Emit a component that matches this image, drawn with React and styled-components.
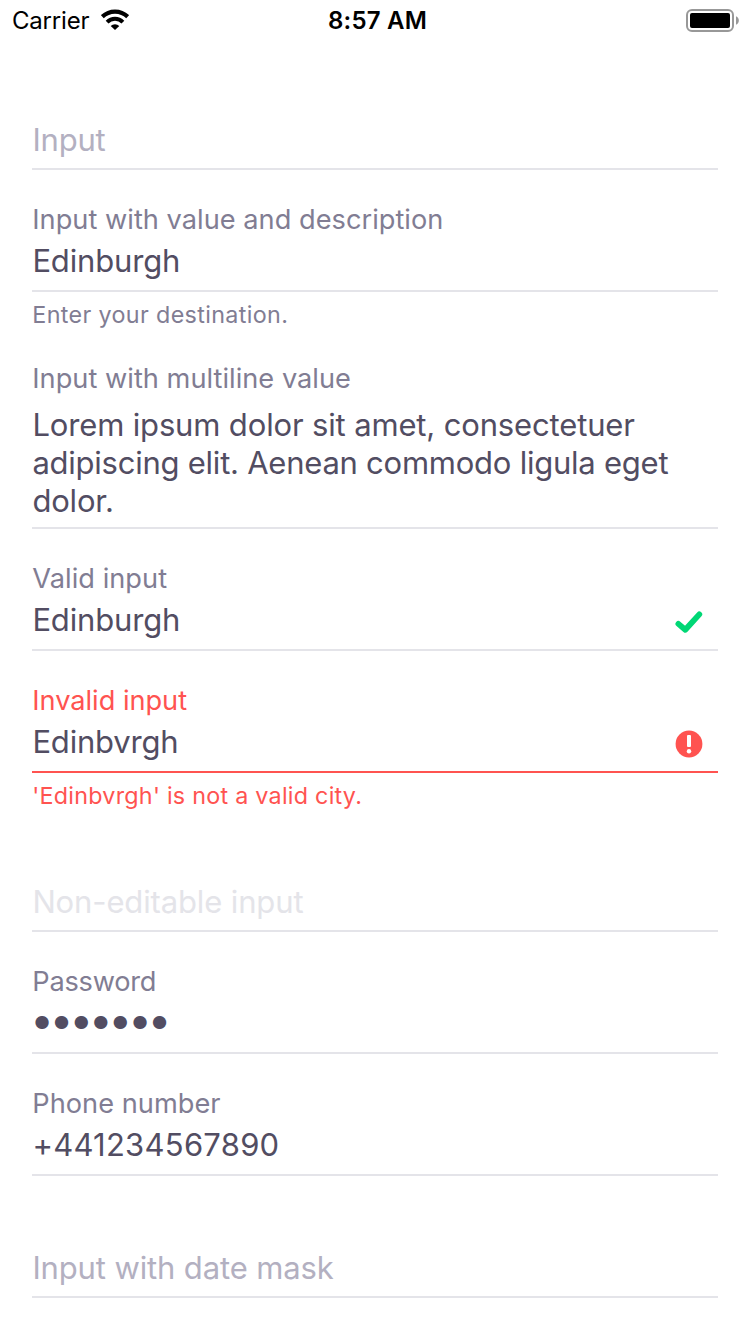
import React from 'react';
import styled, { createGlobalStyle } from 'styled-components';

const GlobalStyle = createGlobalStyle`
  *, *::before, *::after { box-sizing: border-box; }
  body {
    margin: 0;
    background: #fff;
    font-family: Inter, "Liberation Sans", sans-serif;
  }
`;

const colors = {
  line: '#e4e4e9',
  label: '#817d93',
  value: '#524d62',
  placeholder: '#b3b0c1',
  disabled: '#e4e4e9',
  error: '#ff5350',
  valid: '#00d775',
};

const Screen = styled.main`
  width: 750px;
  height: 1334px;
  overflow: hidden;
  background: #fff;
`;

const StatusBar = styled.header`
  display: grid;
  grid-template-columns: 1fr auto 1fr;
  align-items: start;
  height: 40px;
  padding: 0 10px 0 12px;
  color: #000;
  font-size: 24px;
  line-height: 42px;
`;

const Carrier = styled.div`
  display: flex;
  align-items: flex-start;
  gap: 12px;
  letter-spacing: -0.2px;
`;

const Clock = styled.div`
  font-weight: 600;
  letter-spacing: 0.2px;
  padding-left: 3px;
`;

const Wifi = styled.svg`
  display: block;
  margin-top: 9px;
`;

const Battery = styled.svg`
  display: block;
  justify-self: end;
  margin-top: 8px;
`;

const Form = styled.form`
  display: flex;
  flex-direction: column;
  padding: 8px 32px 0;
`;

const Field = styled.div`
  display: flex;
  flex-direction: column;
  padding-top: 33px;
`;

const Label = styled.label`
  height: 34px;
  padding-left: 0.3px;
  color: ${(p) => (p.$invalid ? colors.error : colors.label)};
  font-size: 27.2px;
  line-height: 34px;
  letter-spacing: ${(p) => p.$tracking ?? 0}px;
  white-space: nowrap;
`;

const Control = styled.div`
  display: flex;
  align-items: center;
  justify-content: space-between;
  padding: ${(p) => (p.$multiline ? '10px 0 7px' : '5px 0 10px')};
  border-bottom: 2px solid ${(p) => (p.$invalid ? colors.error : colors.line)};
`;

const Value = styled.div`
  padding-left: 0.4px;
  color: ${(p) => colors[p.$tone ?? 'value']};
  font-size: 31px;
  line-height: 38px;
  letter-spacing: ${(p) => p.$tracking ?? -0.1}px;
  white-space: nowrap;
`;

const Placeholder = styled(Value)`
  margin: 1px 0 -1px;
`;

const Dots = styled(Value)`
  padding-left: 2px;
  font-size: 17.6px;
  letter-spacing: 3.5px;
`;

const StateIcon = styled.svg`
  display: block;
  margin: 4px 15px 0 0;
`;

const Help = styled.div`
  height: 36px;
  padding: 6px 0 0 0.3px;
  margin-bottom: 1px;
  color: ${(p) => (p.$invalid ? colors.error : colors.label)};
  font-size: 23.3px;
  line-height: 34px;
  letter-spacing: ${(p) => p.$tracking}px;
  white-space: nowrap;
`;

const WifiIcon = () => (
  <Wifi width="28" height="21" viewBox="0 0 28 21" fill="none" stroke="#000">
    <path d="M1.3 7.7a18.2 18.2 0 0 1 25.4 0" strokeWidth="4.2" />
    <path d="M6.1 13.1a11.2 11.2 0 0 1 15.8 0" strokeWidth="4" />
    <path d="M14 21 9.7 16.9a6.2 6.2 0 0 1 8.6 0z" fill="#000" stroke="none" />
  </Wifi>
);

const BatteryIcon = () => (
  <Battery width="54" height="24" viewBox="0 0 54 24">
    <rect x="1" y="2" width="46" height="21" rx="5" fill="none" stroke="#989898" strokeWidth="2" />
    <rect x="4" y="5" width="40" height="15" rx="2" fill="#000" />
    <path d="M50 8.3c3.8 1.4 3.8 7 0 8.4z" fill="#989898" />
  </Battery>
);

const CheckIcon = () => (
  <StateIcon width="28" height="28" viewBox="0 0 28 28" fill="none">
    <path d="m3.4 15.9 6.9 5.9L24.3 6.4" stroke={colors.valid} strokeWidth="5.8" strokeLinecap="round" strokeLinejoin="round" />
  </StateIcon>
);

const AlertIcon = () => (
  <StateIcon width="28" height="28" viewBox="0 0 28 28">
    <circle cx="14" cy="14" r="13.4" fill={colors.error} />
    <rect x="12" y="5" width="4" height="12" rx="1" fill="#fff" />
    <circle cx="14" cy="21.3" r="2.2" fill="#fff" />
  </StateIcon>
);

function EmptyField({ text, tone = 'placeholder', tracking }) {
  return (
    <Field>
      <Label />
      <Control>
        <Placeholder $tone={tone} $tracking={tracking}>{text}</Placeholder>
      </Control>
    </Field>
  );
}

function TextField({ label, labelTracking, value, tracking, invalid, icon, help, helpTracking }) {
  return (
    <Field>
      <Label $invalid={invalid} $tracking={labelTracking}>{label}</Label>
      <Control $invalid={invalid}>
        <Value $tracking={tracking}>{value}</Value>
        {icon}
      </Control>
      {help && <Help $invalid={invalid} $tracking={helpTracking}>{help}</Help>}
    </Field>
  );
}

export default function App() {
  return (
    <Screen>
      <GlobalStyle />
      <StatusBar>
        <Carrier>Carrier <WifiIcon /></Carrier>
        <Clock>8:57 AM</Clock>
        <BatteryIcon />
      </StatusBar>
      <Form>
        <EmptyField text="Input" tracking={-0.2} />
        <TextField
          label="Input with value and description"
          labelTracking={0.02}
          value="Edinburgh"
          tracking={-0.15}
          help="Enter your destination."
          helpTracking={0.36}
        />
        <Field>
          <Label $tracking={0.02}>Input with multiline value</Label>
          <Control $multiline>
            <div>
              <Value $tracking={-0.15}>Lorem ipsum dolor sit amet, consectetuer</Value>
              <Value $tracking={-0.24}>adipiscing elit. Aenean commodo ligula eget</Value>
              <Value $tracking={-0.18}>dolor.</Value>
            </div>
          </Control>
        </Field>
        <TextField label="Valid input" labelTracking={0.04} value="Edinburgh" tracking={-0.15} icon={<CheckIcon />} />
        <TextField
          label="Invalid input"
          labelTracking={-0.03}
          value="Edinbvrgh"
          tracking={-0.18}
          invalid
          icon={<AlertIcon />}
          help="'Edinbvrgh' is not a valid city."
          helpTracking={0.26}
        />
        <EmptyField text="Non-editable input" tone="disabled" tracking={-0.13} />
        <Field>
          <Label $tracking={-0.25}>Password</Label>
          <Control>
            <Dots>●●●●●●●</Dots>
          </Control>
        </Field>
        <TextField label="Phone number" labelTracking={0.02} value="+441234567890" tracking={0.25} />
        <EmptyField text="Input with date mask" tracking={-0.13} />
      </Form>
    </Screen>
  );
}
